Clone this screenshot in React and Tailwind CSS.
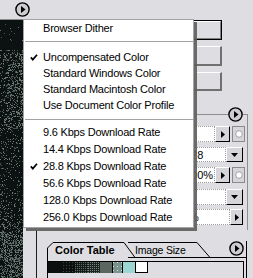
import React from 'react';

// speckled preview image on the left edge
const dots = (() => {
  let s = 9127;
  const rnd = () => {
    s = (s * 1103515245 + 12345) & 0x7fffffff;
    return s / 0x7fffffff;
  };
  const out = [];
  for (let y = 0; y < 258; y++) {
    for (let x = 0; x < 23; x++) {
      const ay = y + 20;
      let d = 0.01;
      if (ay >= 50 && ay < 130) d = 0.18 + (x / 23) * 0.25;
      else if (ay >= 130 && ay < 200) d = 0.14 - (x / 23) * 0.06;
      else if (ay >= 200 && ay < 232) d = 0.18;
      else if (ay >= 232) d = 0.45;
      if (rnd() < d) out.push([x, y, rnd() < 0.5 ? '#46524e' : '#6c7a75']);
    }
  }
  return out;
})();

const CircleBtn = () => (
  <svg width="15" height="15" viewBox="0 0 15 15">
    <circle cx="7.5" cy="7.5" r="6.6" fill="#cdcdd1" stroke="#000" strokeWidth="1.4" />
    <polygon points="6,4 10.5,7.5 6,11" fill="#000" />
  </svg>
);

const Check = () => (
  <svg width="8" height="7" viewBox="0 0 8 7">
    <polyline points="0.8,3.4 2.8,5.6 7,0.8" fill="none" stroke="#000" strokeWidth="1.7" />
  </svg>
);

const Item = ({ label, checked, h }) => (
  <div className={`flex items-center ${h}`}>
    <span className="w-[19px] pl-[6px] flex items-center">{checked && <Check />}</span>
    <span className="whitespace-nowrap">{label}</span>
  </div>
);

const ArrowBtn = ({ w }) => (
  <div className={`${w} bg-[#d6d6da] border-t border-l border-t-white border-l-white border-r border-b border-r-black border-b-black flex items-center justify-center`}>
    <svg width="4" height="7" viewBox="0 0 4 7">
      <polygon points="0,0 4,3.5 0,7" fill="#000" />
    </svg>
  </div>
);

const DropBtn = () => (
  <div className="w-[17px] bg-[#d6d6da] border-t border-l border-t-white border-l-white border-r border-b border-r-black border-b-black flex items-center justify-center">
    <svg width="7" height="4" viewBox="0 0 7 4">
      <polygon points="0,0 7,0 3.5,4" fill="#000" />
    </svg>
  </div>
);

const RadioBox = () => (
  <div className="w-[13px] bg-[#d6d6da] border border-[#8a8a8a] flex items-center justify-center">
    <svg width="8" height="8" viewBox="0 0 8 8">
      <circle cx="4" cy="4" r="3.3" fill="#fff" stroke="#9a9a9a" strokeWidth="0.9" />
    </svg>
  </div>
);

const Input = ({ w, text }) => (
  <div className={`${w} bg-white border border-dotted border-[#9c9c9c] pl-[1px] text-[11px] leading-[14px] text-black whitespace-nowrap overflow-hidden`}>
    {text}
  </div>
);

const swatchDither = (fg, step) => (
  <svg width="100%" height="100%">
    <defs>
      <pattern id={`p${step}${fg.slice(1)}`} width={step} height={step} patternUnits="userSpaceOnUse">
        <rect width="1" height="1" fill={fg} />
      </pattern>
    </defs>
    <rect width="100%" height="100%" fill={`url(#p${step}${fg.slice(1)})`} />
  </svg>
);

export default function App() {
  return (
    <div className="w-[253px] h-[278px] bg-[#dedee2] relative overflow-hidden font-['Liberation_Sans',Arial,sans-serif] text-black">
      <div className="h-[19px] flex items-start">
        <div className="ml-[15px] mt-[2px] flex">
          <CircleBtn />
        </div>
      </div>

      <div className="flex h-[259px]">
        <div className="w-[23px] border-t border-[#8a8a8a] bg-[#0c1211]">
          <svg width="23" height="258">
            {dots.map(([x, y, c], i) => (
              <rect key={i} x={x} y={y} width="1" height="1" fill={c} />
            ))}
          </svg>
        </div>

        <div className="flex-1 flex flex-col">
          {/* dialog buttons */}
          <div className="flex flex-col items-end pr-[31px] pt-[1px]">
            <div className="w-[40px] h-[20px] border border-black">
              <div className="h-full bg-[#dedee2] border-t border-l border-t-white border-l-white border-r border-b border-r-[#808080] border-b-[#808080]" />
            </div>
            <div className="mt-[6px] w-[40px] h-[20px] border-t border-l border-t-white border-l-white border-r-2 border-b-2 border-r-[#707070] border-b-[#707070]" />
            <div className="mt-[6px] w-[40px] h-[19px] border-t border-l border-t-white border-l-white border-r-2 border-b-2 border-r-[#707070] border-b-[#707070]" />
          </div>

          {/* settings group */}
          <div className="relative mt-[23px] ml-[20px] mr-[5px] h-[116px] border-t border-r border-[#8e8e8e] pt-[11px] pr-[2px] flex flex-col">
            <div className="absolute right-[4px] top-[-8px] flex">
              <CircleBtn />
            </div>
            <div className="flex justify-end h-[16px]">
              <Input w="w-[40px]" text="" />
              <ArrowBtn w="w-[15px]" />
              <div className="w-[2px]" />
              <RadioBox />
            </div>
            <div className="flex justify-end h-[15px] mt-[5px]">
              <Input w="w-[43px]" text="128" />
              <DropBtn />
              <div className="w-[2px]" />
            </div>
            <div className="flex justify-end h-[16px] mt-[5px]">
              <Input w="w-[32px]" text="100%" />
              <ArrowBtn w="w-[15px]" />
              <div className="w-[2px]" />
              <RadioBox />
            </div>
            <div className="flex justify-end h-[16px] mt-[6px]">
              <Input w="w-[43px]" text="" />
              <DropBtn />
              <div className="w-[2px]" />
            </div>
            <div className="flex justify-end h-[16px] mt-[4px]">
              <Input w="w-[49px]" text="0%" />
              <ArrowBtn w="w-[13px]" />
              <div className="w-[2px]" />
            </div>
          </div>

          {/* palette with tabs */}
          <div className="flex-1 ml-[13px] border-l border-[#1c1c1c] pt-[12px] flex flex-col">
            <div className="flex h-[16px] ml-[10px] mr-[6px]">
              <svg width="6" height="16" className="shrink-0">
                <polyline points="0.5,16 0.5,6 6,0.5" fill="none" stroke="#000" strokeWidth="1" />
              </svg>
              <div className="w-[71px] border-t border-black pl-[2px] text-[11px] font-bold leading-[14px] whitespace-nowrap">
                Color Table
              </div>
              <svg width="11" height="16" className="shrink-0">
                <line x1="0" y1="0.5" x2="11" y2="15.5" stroke="#000" strokeWidth="1" />
              </svg>
              <div className="w-[69px] -ml-[7px] border-t border-b border-black pl-[7px] text-[10.5px] tracking-[-0.2px] leading-[14px] whitespace-nowrap">
                Image Size
              </div>
              <svg width="13" height="16" className="shrink-0">
                <line x1="0" y1="0.5" x2="13" y2="15.5" stroke="#000" strokeWidth="1" />
                <line x1="0" y1="15.5" x2="13" y2="15.5" stroke="#000" strokeWidth="1" />
              </svg>
              <div className="flex-1 border-b border-r border-black flex justify-end items-start pr-[2px] -mt-[1px]">
                <CircleBtn />
              </div>
            </div>
            <div className="flex-1 ml-[10px] mr-[6px] border-l border-r border-black pt-[3px] pr-[2px]">
              <div className="h-full border-t border-r border-black flex items-start">
                <div className="flex h-[11px]">
                  <div className="w-[15px] bg-[#0b0f0e]" />
                  <div className="w-[12px] bg-[#0b0f0e]">{swatchDither('#3e4a46', 3)}</div>
                  <div className="w-[13px] bg-[#141a18]">{swatchDither('#5c6a65', 2)}</div>
                  <div className="w-[12px] bg-[#1c2421]">{swatchDither('#7a8883', 2)}</div>
                  <div className="w-[13px] bg-[#5b6661] border-r border-black" />
                  <div className="w-[10px] bg-[#7b918d] border-r border-black">{swatchDither('#c9e8e5', 4)}</div>
                  <div className="w-[13px] bg-[#9cd6d2] border-r border-black" />
                  <div className="w-[12px] bg-white border-r border-b border-black" />
                </div>
              </div>
            </div>
          </div>
        </div>
      </div>

      {/* popup menu */}
      <div className="absolute left-[23px] top-[19px] w-[171px] h-[209px] bg-white border border-[#a4a4a4] shadow-[3px_3px_0_rgba(95,95,95,0.92)] text-[11px] tracking-[-0.2px]">
        <Item label="Browser Dither" h="h-[17px]" />
        <div className="h-[12px] pt-[4px] pl-[1px]">
          <div className="h-px bg-[#a2a2a2]" />
        </div>
        <Item label="Uncompensated Color" checked h="h-[16px]" />
        <Item label="Standard Windows Color" h="h-[16px]" />
        <Item label="Standard Macintosh Color" h="h-[16px]" />
        <Item label="Use Document Color Profile" h="h-[16px]" />
        <div className="h-[11px] pt-[6px] pl-[1px]">
          <div className="h-px bg-[#a2a2a2]" />
        </div>
        <Item label="9.6 Kbps Download Rate" h="h-[17px]" />
        <Item label="14.4 Kbps Download Rate" h="h-[17px]" />
        <Item label="28.8 Kbps Download Rate" checked h="h-[17px]" />
        <Item label="56.6 Kbps Download Rate" h="h-[17px]" />
        <Item label="128.0 Kbps Download Rate" h="h-[17px]" />
        <Item label="256.0 Kbps Download Rate" h="h-[17px]" />
      </div>
    </div>
  );
}
